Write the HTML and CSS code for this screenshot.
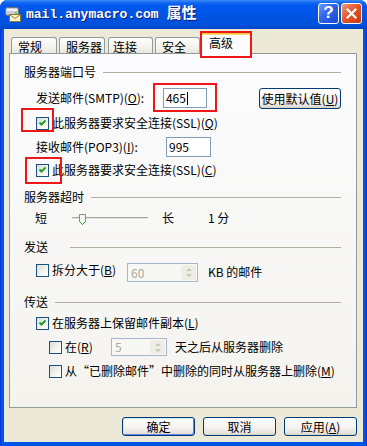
FILE: index.html
```html
<!DOCTYPE html>
<html lang="zh-CN">
<head>
  <meta charset="UTF-8" />
  <title>mail.anymacro.com 属性</title>
  <link rel="stylesheet" href="styles.css">
</head>
<body>

  <div class="window">
    <div class="titlebar">
      <svg class="app-icon" width="18" height="16" viewBox="0 0 18 16">
        <rect x="1.5" y="1.5" width="13" height="8" rx="2" fill="#c9ccd3" stroke="#6b7079"/>
        <rect x="3" y="3" width="10" height="2" fill="#eef0f4"/>
        <circle cx="12" cy="7" r="1" fill="#2fc43a"/>
        <rect x="5.5" y="8.5" width="11" height="7" fill="#fff5c8" stroke="#8a7a3a"/>
        <path d="M5.5 8.5 L11 12.5 L16.5 8.5" fill="none" stroke="#8a7a3a"/>
      </svg>
      <span class="title">mail.anymacro.com <span class="cjk">属性</span></span>
      <div class="caption-btns">
        <span class="cap-btn help">?</span>
        <span class="cap-btn close">
          <svg width="11" height="11" viewBox="0 0 11 11"><path d="M1.5 1.5 L9.5 9.5 M9.5 1.5 L1.5 9.5" stroke="#fff" stroke-width="2.2" stroke-linecap="square"/></svg>
        </span>
      </div>
    </div>

    <div class="client">
      <div class="tabs">
        <div class="tab t1">常规</div>
        <div class="tab t2">服务器</div>
        <div class="tab t3">连接</div>
        <div class="tab t4">安全</div>
        <div class="tab active">高级</div>
      </div>

      <div class="page">
        <div class="group-head"><span>服务器端口号</span><i class="rule"></i></div>

        <div class="row port smtp">
          <span class="field-label">发送邮件(SMTP)(<u>O</u>):</span>
          <div class="textbox">465<span class="caret"></span></div>
          <span class="btn default-val">使用默认值(<u>U</u>)</span>
        </div>
        <div class="row check-row c1">
          <span class="check on"></span><span>此服务器要求安全连接(SSL)(<u>Q</u>)</span>
        </div>

        <div class="row port pop">
          <span class="field-label">接收邮件(POP3)(<u>I</u>):</span>
          <div class="textbox">995</div>
        </div>
        <div class="row check-row c2">
          <span class="check on"></span><span>此服务器要求安全连接(SSL)(<u>C</u>)</span>
        </div>

        <div class="group-head g2"><span>服务器超时</span><i class="rule"></i></div>
        <div class="row slider-row">
          <span class="short">短</span>
          <svg class="slider" width="80" height="14" viewBox="0 0 80 14">
            <line x1="1" y1="5.5" x2="77" y2="5.5" stroke="#a7a6a0"/>
            <line x1="1" y1="6.5" x2="77" y2="6.5" stroke="#e2e1da"/>
            <line x1="1" y1="7.5" x2="77" y2="7.5" stroke="#ffffff"/>
            <path d="M8.5 2.5 H14.5 V9.5 L11.5 12.5 L8.5 9.5 Z" fill="#f6f6f3" stroke="#8c8b85"/>
            <path d="M8.5 9.5 L11.5 12.5 L14.5 9.5" fill="none" stroke="#21a121"/>
          </svg>
          <span class="long">长</span>
          <span class="mins">1 分</span>
        </div>

        <div class="group-head g3"><span>发送</span><i class="rule"></i></div>
        <div class="row split-row">
          <span class="check-unit w91"><span class="check"></span><span>拆分大于(<u>B</u>)</span></span>
          <div class="spin w71">60<span class="spin-btns"><i class="up"></i><i class="down"></i></span></div>
          <span class="after">KB 的邮件</span>
        </div>

        <div class="group-head g4"><span>传送</span><i class="rule"></i></div>
        <div class="row check-row c4">
          <span class="check on"></span><span>在服务器上保留邮件副本(<u>L</u>)</span>
        </div>
        <div class="row days-row">
          <span class="check-unit w62"><span class="check"></span><span>在(<u>R</u>)</span></span>
          <div class="spin w56">5<span class="spin-btns"><i class="up"></i><i class="down"></i></span></div>
          <span class="after">天之后从服务器删除</span>
        </div>
        <div class="row check-row c6">
          <span class="check"></span><span>从“已删除邮件”中删除的同时从服务器上删除(<u>M</u>)</span>
        </div>
      </div>

      <div class="buttons">
        <span class="btn default">确定</span>
        <span class="btn">取消</span>
        <span class="btn">应用(<u>A</u>)</span>
      </div>
    </div>

    <!-- red annotation boxes -->
    <div class="mark m1"></div>
    <div class="mark m2"></div>
    <div class="mark m3"></div>
    <div class="mark m4"></div>
  </div>

</body>
</html>
```

FILE: styles.css
```css
* {
  box-sizing: border-box;
}
html, body {
  margin: 0;
  background: #ffffff;
}
body {
  font-family: "Noto Sans CJK SC", "Noto Sans", sans-serif;
  font-size: 12px;
  line-height: 16px;
  color: #000;
}
u {
  text-decoration: underline;
  text-underline-offset: 1px;
}

.window {
  position: relative;
  width: 367px;
  height: 446px;
  background: linear-gradient(90deg, #0831d9 0, #0055e5 2px, #0055e5 365px, #0831d9 367px);
  border-radius: 7px 7px 0 0;
  display: flex;
  flex-direction: column;
  overflow: hidden;
}

/* title bar */
.titlebar {
  height: 29px;
  flex: none;
  display: flex;
  align-items: center;
  padding: 0 5px 0 4px;
  background: linear-gradient(#3d8cf7 0, #0f64ef 3px, #0058ee 6px, #0055e5 50%, #0051dc 85%, #0046c6 100%);
  border-radius: 7px 7px 0 0;
}
.app-icon {
  flex: none;
  margin-top: -1px;
}
.title {
  margin-left: 4px;
  font-family: "Liberation Mono", monospace;
  font-size: 13px;
  font-weight: bold;
  color: #fff;
  text-shadow: 1px 1px 0 #0a1e7d;
  white-space: nowrap;
  margin-top: -3px;
}
.title .cjk {
  font-family: "Noto Sans CJK SC", sans-serif;
  font-size: 15px;
}
.caption-btns {
  margin-left: auto;
  display: flex;
  gap: 2px;
  margin-top: -3px;
}
.cap-btn {
  width: 21px;
  height: 21px;
  border: 1px solid #fff;
  border-radius: 3px;
  display: flex;
  align-items: center;
  justify-content: center;
}
.help {
  background: linear-gradient(135deg, #6c9bff 0, #2f63ea 45%, #1a49d0 100%);
  color: #fff;
  font-family: "Liberation Sans", sans-serif;
  font-weight: bold;
  font-size: 17px;
}
.close {
  background: linear-gradient(135deg, #f29b7a 0, #e2582f 45%, #c9360d 100%);
}

/* client area */
.client {
  flex: 1;
  margin: 0 4px 4px 4px;
  background: #ece9d8;
  padding: 2px 6px 0 5px;
  display: flex;
  flex-direction: column;
}

.tabs {
  height: 22px;
  display: flex;
  align-items: flex-end;
  padding-left: 2px;
}
.tab {
  height: 16px;
  border: 1px solid #919b9c;
  border-bottom: 0;
  border-radius: 3px 3px 0 0;
  background: linear-gradient(#ffffff, #f3f2ec 60%, #e7e6df);
  padding-left: 6px;
  line-height: 18px;
  white-space: nowrap;
}
.t1 { width: 46px; }
.t2 { width: 46px; margin-left: 2px; }
.t3 { width: 45px; margin-left: 3px; padding-left: 4px; }
.t4 { width: 45px; margin-left: 2px; }
.tab.active {
  position: relative;
  z-index: 1;
  width: 50px;
  height: 23px;
  margin-left: 1px;
  margin-bottom: -1px;
  background: #fcfcfe;
  border-top: 3px solid #ffc73c;
  box-shadow: inset 0 1px 0 #ffd96b;
  padding-left: 7px;
  line-height: 18px;
}

.page {
  height: 355px;
  flex: none;
  border: 1px solid #919b9c;
  background: linear-gradient(#fcfcfe, #f4f3ee);
  padding: 10px 15px 0 14px;
}

.group-head {
  height: 16px;
  display: flex;
  align-items: center;
}
.group-head .rule {
  flex: 1;
  height: 1px;
  margin-left: 7px;
  background: #b0ada1;
}
.g2 { margin-top: 11px; }
.g3 { margin-top: 13px; }
.g3 .rule { margin-left: 22px; }
.g4 { margin-top: 12px; }

.row {
  display: flex;
  align-items: flex-start;
  padding-left: 12px;
  white-space: nowrap;
}

.port {
  height: 21px;
}
.smtp { margin-top: 8px; }
.pop { margin-top: 6px; height: 20px; }
.field-label {
  width: 130px;
  line-height: 20px;
}
.textbox {
  width: 45px;
  height: 20px;
  border: 1px solid #7f9db9;
  background: #fff;
  padding-left: 2px;
  line-height: 18px;
  display: flex;
  align-items: center;
}
.caret {
  width: 1px;
  height: 13px;
  background: #000;
  margin-left: 1px;
}

.btn {
  display: flex;
  align-items: center;
  justify-content: center;
  border: 1px solid #003c74;
  border-radius: 3px;
  background: linear-gradient(#ffffff, #f3f2ee 60%, #e4e1d8 90%, #d6d0c5);
  white-space: nowrap;
}
.default-val {
  width: 84px;
  height: 21px;
  margin-left: 52px;
}

.check-row {
  height: 16px;
  align-items: center;
}
.check-row .check {
  margin-right: 3px;
}
.c1 { margin-top: 6px; }
.c2 { margin-top: 5px; }
.c4 { margin-top: 5px; }
.c6 { margin-top: 7px; padding-left: 25px; }

.check {
  flex: none;
  width: 13px;
  height: 13px;
  border: 1px solid #1c5180;
  background: linear-gradient(135deg, #dcdcd7 0, #f4f4f1 60%, #fff 100%);
}
.check.on {
  background: url("data:image/svg+xml,%3Csvg xmlns='http://www.w3.org/2000/svg' width='11' height='11' viewBox='0 0 11 11'%3E%3Cpath d='M2.5 4.5 L4.5 6.5 L8.5 2.5' fill='none' stroke='%2321a121' stroke-width='2'/%3E%3C/svg%3E") no-repeat center, linear-gradient(135deg, #dcdcd7 0, #f4f4f1 60%, #fff 100%);
}

.check-unit {
  display: flex;
  align-items: center;
  height: 16px;
  gap: 3px;
}
.w91 { width: 91px; }
.w62 { width: 62px; }

.slider-row {
  margin-top: 5px;
  height: 16px;
  align-items: center;
  padding-left: 11px;
}
.short { width: 36px; }
.slider { margin-top: 1px; }
.long { margin-left: 11px; width: 46px; }

.split-row {
  margin-top: 7px;
  height: 20px;
}
.days-row {
  margin-top: 7px;
  height: 18px;
  padding-left: 25px;
}
.days-row .check-unit { margin-top: 1px; }

.spin {
  position: relative;
  border: 1px solid #a4b7cf;
  background: #f7f7f4;
  color: #aca899;
  padding-left: 3px;
  display: flex;
  align-items: center;
}
.w71 { width: 71px; height: 19px; margin-top: 1px; }
.w56 { width: 56px; height: 18px; }
.spin-btns {
  position: absolute;
  top: 1px;
  right: 1px;
  bottom: 1px;
  width: 15px;
  border-radius: 2px;
  background: #eeede6;
  display: flex;
  flex-direction: column;
  align-items: center;
  justify-content: center;
  gap: 3px;
}
.spin-btns i {
  width: 0;
  height: 0;
  border-left: 3px solid transparent;
  border-right: 3px solid transparent;
}
.spin-btns .up { border-bottom: 3px solid #c9c7ba; }
.spin-btns .down { border-top: 3px solid #c9c7ba; }
.after {
  line-height: 20px;
}
.split-row .after { margin-left: 10px; }
.days-row .after { margin-left: 8px; line-height: 18px; }

.buttons {
  margin-top: 9px;
  display: flex;
  justify-content: flex-end;
  gap: 8px;
}
.buttons .btn {
  width: 73px;
  height: 19px;
}
.buttons .btn.default {
  box-shadow: inset 1px 1px 0 #cee7ff, inset -1px -1px 0 #6982ee;
}

/* annotation boxes laid over the dialog */
.mark {
  position: absolute;
  border: 2px solid #ee1616;
  z-index: 5;
}
.m1 { left: 200px; top: 31px; width: 52px; height: 27px; }
.m2 { left: 153px; top: 83px; width: 64px; height: 29px; }
.m3 { left: 21px; top: 108px; width: 33px; height: 24px; }
.m4 { left: 25px; top: 157px; width: 37px; height: 27px; }
```
